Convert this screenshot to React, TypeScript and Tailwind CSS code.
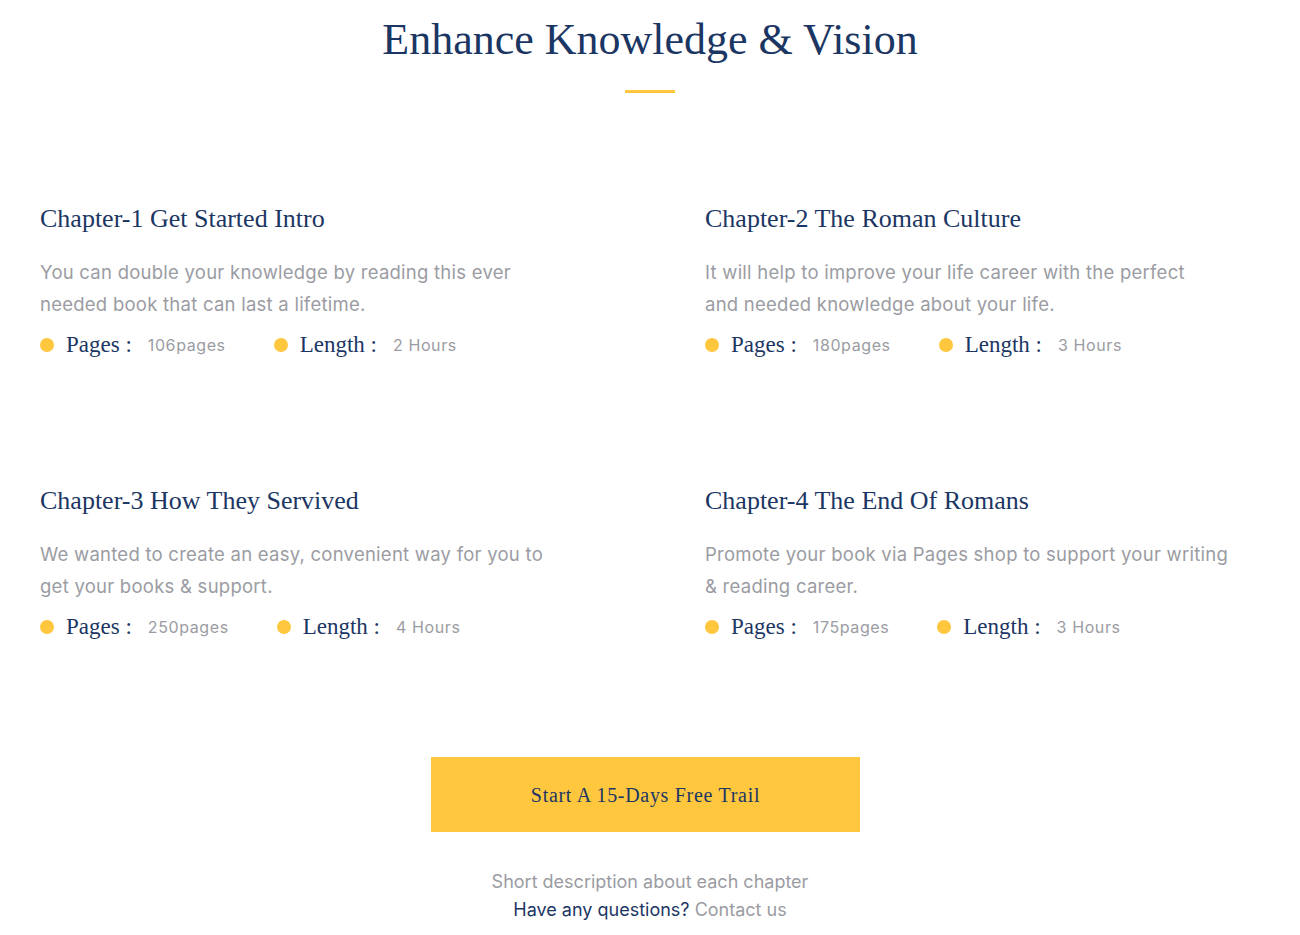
const chapters = [
  {
    title: 'Chapter-1 Get Started Intro',
    lines: ['You can double your knowledge by reading this ever', 'needed book that can last a lifetime.'],
    pages: '106pages',
    length: '2 Hours',
  },
  {
    title: 'Chapter-2 The Roman Culture',
    lines: ['It will help to improve your life career with the perfect', 'and needed knowledge about your life.'],
    pages: '180pages',
    length: '3 Hours',
  },
  {
    title: 'Chapter-3 How They Servived',
    lines: ['We wanted to create an easy, convenient way for you to', 'get your books & support.'],
    pages: '250pages',
    length: '4 Hours',
  },
  {
    title: 'Chapter-4 The End Of Romans',
    lines: ['Promote your book via Pages shop to support your writing', '& reading career.'],
    pages: '175pages',
    length: '3 Hours',
  },
];

const serif = "font-['Liberation_Serif',serif]";

function Meta({ label, value }: { label: string; value: string }) {
  return (
    <div className="flex items-center">
      <span className="w-[14px] h-[14px] rounded-full bg-[#fec73e]" />
      <span className={`${serif} text-[23px] text-[#1c3664] ml-3`}>{label}</span>
      <span className="text-[16px] tracking-[0.6px] text-[#9b9ca3] ml-4">{value}</span>
    </div>
  );
}

function App() {
  return (
    <div className="min-h-screen bg-white font-['Inter',sans-serif]">
      {/* Heading */}
      <div className="flex flex-col items-center pt-[14px]">
        <h2 className={`${serif} text-[44px] leading-[52px] text-[#1c3664]`}>
          Enhance Knowledge &amp; Vision
        </h2>
        <div className="w-[50px] h-[3px] bg-[#fec73e] mt-[24px]" />
      </div>

      {/* Chapters */}
      <div className="grid grid-cols-[665px_1fr] gap-y-[120px] pl-10 mt-[108px]">
        {chapters.map((c) => (
          <div key={c.title}>
            <h3 className={`${serif} text-[26px] leading-[36px] text-[#1c3664]`}>
              {c.title}
            </h3>
            <p className="text-[18.5px] tracking-[0.25px] leading-[32px] text-[#9b9ca3] mt-[19px]">
              {c.lines[0]}
              <br />
              {c.lines[1]}
            </p>
            <div className="flex items-center gap-12 mt-[8px]">
              <Meta label="Pages :" value={c.pages} />
              <Meta label="Length :" value={c.length} />
            </div>
          </div>
        ))}
      </div>

      {/* CTA */}
      <div className="flex flex-col items-center mt-[113px]">
        <button
          className={`${serif} w-[429px] h-[75px] mr-[9px] bg-[#fec73e] text-[#1c3664] text-[20px] tracking-[0.7px]`}
        >
          Start A 15-Days Free Trail
        </button>
        <p className="text-[18px] leading-[28px] text-[#9b9ca3] mt-[36px]">
          Short description about each chapter
        </p>
        <p className="text-[18px] leading-[28px] text-[#1c3664]">
          Have any questions? <span className="text-[#9b9ca3]">Contact us</span>
        </p>
      </div>
    </div>
  );
}

export default App;
